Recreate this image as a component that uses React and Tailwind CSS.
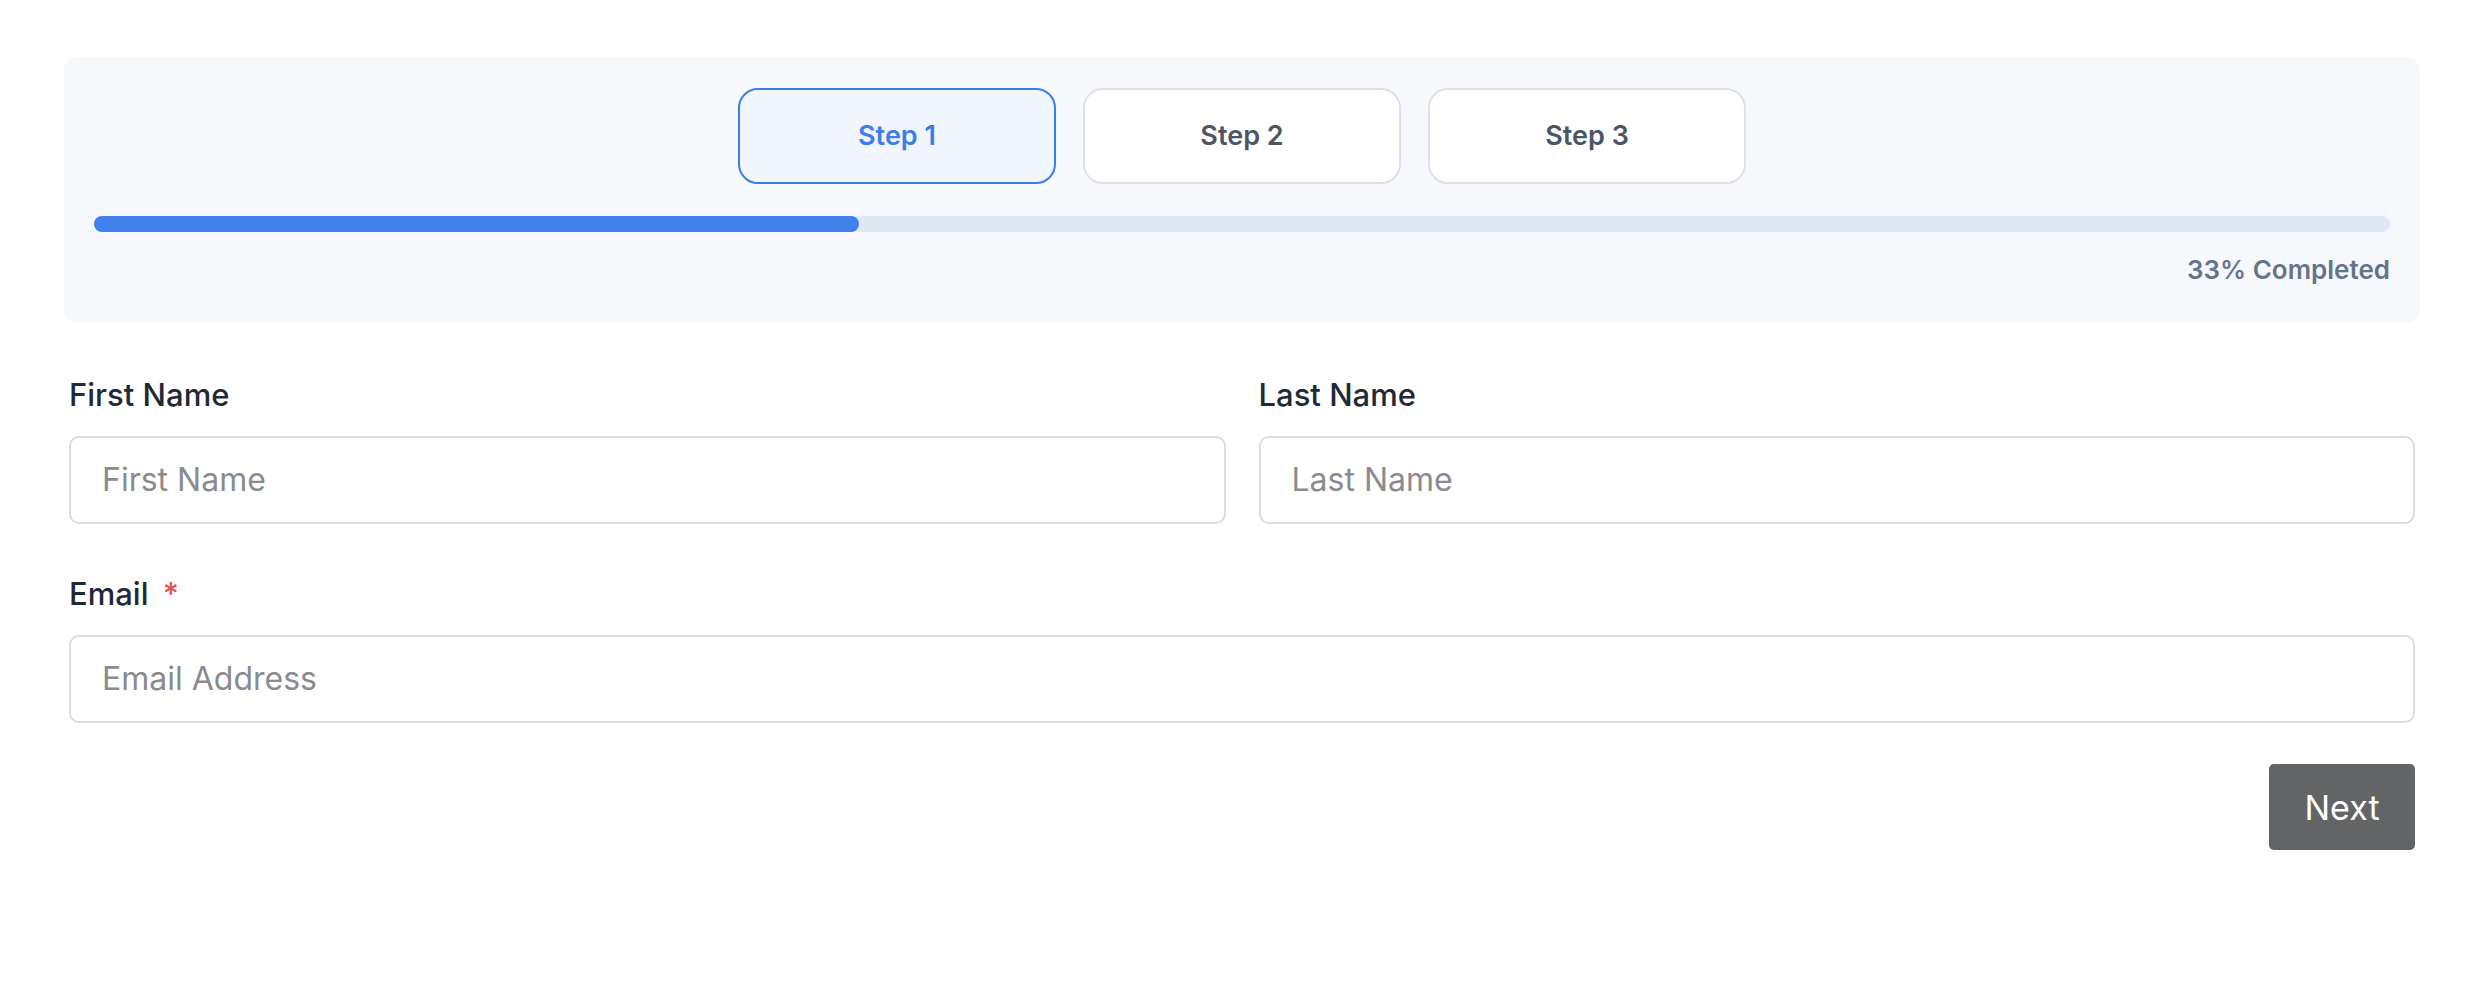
export default function App() {
  const steps = ["Step 1", "Step 2", "Step 3"];
  return (
    <div className="w-[2484px] h-[1004px] bg-white pt-[57px] px-[64px]" style={{ fontFamily: "Inter, 'Noto Sans', sans-serif" }}>
      <div className="bg-[#f6f8fc] rounded-[14px] h-[266px] px-[30px] pt-[31px]">
        <div className="flex justify-center gap-[27px]">
          {steps.map((s, i) => (
            <div
              key={s}
              className={
                "w-[318px] h-[96px] rounded-[20px] flex items-center justify-center text-[27px] font-semibold " +
                (i === 0
                  ? "border-2 border-[#3b7de9] bg-[#f1f6fe] text-[#3b7de9]"
                  : "border-2 border-[#dfe1e6] bg-white text-[#4b5563]")
              }
            >
              {s}
            </div>
          ))}
        </div>
        <div className="mt-[32px] h-[16px] rounded-full bg-[#dfe8f5]">
          <div className="h-full w-[33.3%] rounded-full bg-[#3f7fee]" />
        </div>
        <div className="mt-[18px] text-right text-[26px] font-semibold text-[#64748b]">33% Completed</div>
      </div>
      <div className="px-[5px] pt-[52px]">
        <div className="grid grid-cols-2 gap-x-[33px]">
          <div>
            <div className="text-[31px] font-medium text-[#1f2937] leading-[40px] mb-[21px]">First Name</div>
            <div className="h-[88px] rounded-[10px] border-2 border-[#dcdcdf] flex items-center pl-[31px] text-[32px] text-[#8a8b8e]">First Name</div>
          </div>
          <div>
            <div className="text-[31px] font-medium text-[#1f2937] leading-[40px] mb-[21px]">Last Name</div>
            <div className="h-[88px] rounded-[10px] border-2 border-[#dcdcdf] flex items-center pl-[31px] text-[32px] text-[#8a8b8e]">Last Name</div>
          </div>
        </div>
        <div className="mt-[50px] text-[31px] font-medium text-[#1f2937] leading-[40px] mb-[21px]">
          Email <span className="text-[#e05252] ml-[6px]">*</span>
        </div>
        <div className="h-[88px] rounded-[10px] border-2 border-[#dcdcdf] flex items-center pl-[31px] text-[32px] text-[#8a8b8e]">Email Address</div>
        <div className="flex justify-end mt-[41px]">
          <div className="w-[146px] h-[86px] rounded-[5px] bg-[#636466] text-white text-[34px] flex items-center justify-center">Next</div>
        </div>
      </div>
    </div>
  );
}
